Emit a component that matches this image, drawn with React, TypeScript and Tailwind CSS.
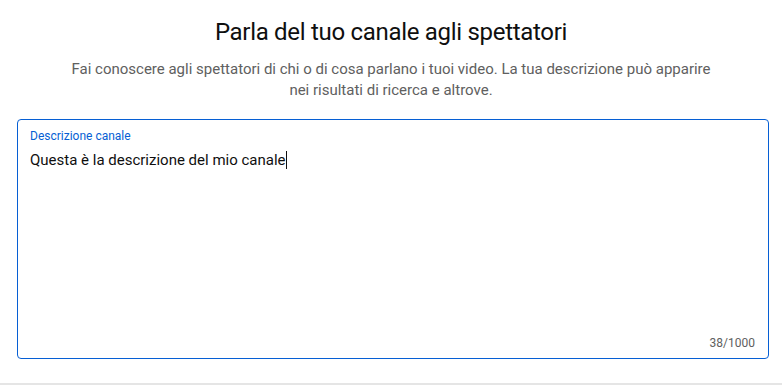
import React from "react";

const App = () => {
  return (
    <div className="w-[782px] h-[385px] bg-white flex flex-col font-['Roboto',sans-serif] overflow-hidden">
      <div className="flex flex-col items-center px-[17px] pt-[16px]">
        <h1 className="text-[24px] leading-[32px] tracking-[-0.3px] text-[#0f0f0f] font-normal">
          Parla del tuo canale agli spettatori
        </h1>
        <p className="mt-[11px] max-w-[648px] text-center text-[15px] leading-[21px] text-[#606060]">
          Fai conoscere agli spettatori di chi o di cosa parlano i tuoi video. La tua descrizione può apparire
          nei risultati di ricerca e altrove.
        </p>
        <div className="mt-[18px] w-[752px] h-[240px] self-start border border-[#065fd4] rounded-[4px] flex flex-col px-[12px] pt-[8px] pb-[7px]">
          <label className="text-[12px] leading-[16px] text-[#065fd4]">Descrizione canale</label>
          <div className="mt-[5px] text-[15px] leading-[22px] text-[#0f0f0f] flex items-center">
            <span>Questa è la descrizione del mio canale</span>
            <span className="w-px h-[18px] bg-[#0f0f0f]"></span>
          </div>
          <div className="mt-auto self-end pr-[1px] text-[12px] leading-[16px] text-[#606060]">38/1000</div>
        </div>
      </div>
      <div className="mt-auto h-[2px] bg-[#e5e5e5]"></div>
    </div>
  );
};

export default App;
